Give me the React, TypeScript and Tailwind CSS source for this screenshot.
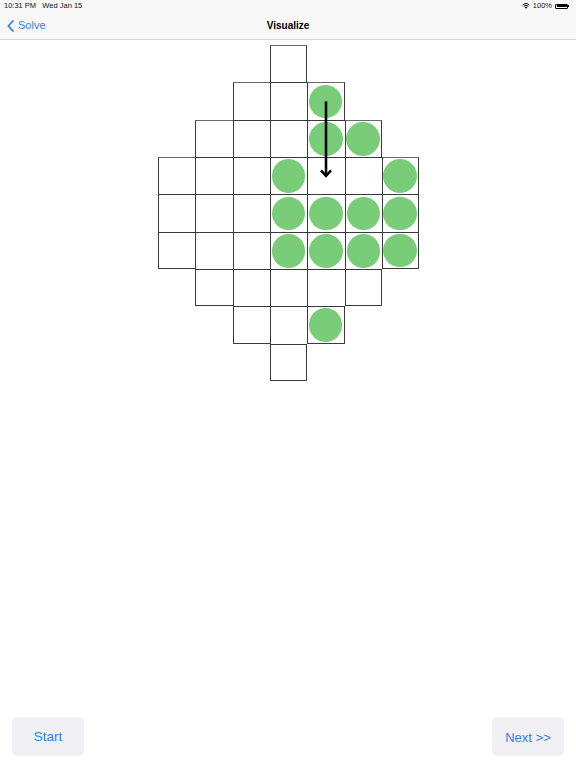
import React from 'react';

// which columns of each row are part of the board
const rows: [number, number][] = [
  [3, 3],
  [2, 4],
  [1, 5],
  [0, 6],
  [0, 6],
  [0, 6],
  [1, 5],
  [2, 4],
  [3, 3],
];

// pegs as "row-col"
const pegs = new Set([
  '1-4',
  '2-4', '2-5',
  '3-3', '3-6',
  '4-3', '4-4', '4-5', '4-6',
  '5-3', '5-4', '5-5', '5-6',
  '7-4',
]);

const isOn = (r: number, c: number) =>
  r >= 0 && r < rows.length && c >= rows[r][0] && c <= rows[r][1];

function StatusBar() {
  return (
    <div className="h-[12px] flex items-center justify-between px-[4px] text-[7.5px] text-[#111]">
      <span>10:31 PM&nbsp;&nbsp;&nbsp;Wed Jan 15</span>
      <div className="flex items-center gap-[3px] pr-[3px]">
        <svg width="8" height="6" viewBox="0 0 16 12">
          <path d="M8 11.5 L5.3 8.6 A4 4 0 0 1 10.7 8.6 Z" fill="#000" />
          <path d="M3.4 6.6 A6.8 6.8 0 0 1 12.6 6.6" stroke="#000" strokeWidth="2" fill="none" />
          <path d="M1.2 4.2 A10 10 0 0 1 14.8 4.2" stroke="#000" strokeWidth="2" fill="none" />
        </svg>
        <span>100%</span>
        <div className="flex items-center">
          <div className="w-[13px] h-[5px] rounded-[1px] border border-black p-[0.5px]">
            <div className="w-full h-full bg-black" />
          </div>
          <div className="w-[1px] h-[2px] bg-black" />
        </div>
      </div>
    </div>
  );
}

function NavBar() {
  return (
    <div className="relative h-[28px] flex items-center border-b border-[#d6d6d6]">
      <div className="flex items-center gap-[4px] pl-[7px] text-[#2f82ea] text-[11px]">
        <svg width="7" height="12" viewBox="0 0 7 12">
          <path d="M6 1 L1.3 6 L6 11" stroke="#2f82ea" strokeWidth="1.8" fill="none" strokeLinecap="round" strokeLinejoin="round" />
        </svg>
        <span>Solve</span>
      </div>
      <div className="absolute inset-0 flex items-center justify-center text-[10px] font-semibold text-black pointer-events-none">
        Visualize
      </div>
    </div>
  );
}

function Board() {
  return (
    <div className="relative mt-[5px] mx-auto w-[261px] h-[336px]">
      <div className="grid grid-cols-[37px_38px_37px_37px_38px_37px_37px] grid-rows-[37px_38px_37px_37px_38px_37px_37px_38px_37px]">
        {rows.map((_, r) =>
          Array.from({ length: 7 }, (_, c) => {
            const on = isOn(r, c);
            if (!on) return <div key={`${r}-${c}`} />;
            const right = !isOn(r, c + 1);
            const bottom = !isOn(r + 1, c);
            return (
              <div
                key={`${r}-${c}`}
                className={`flex items-center justify-center border-[#3a3a3a] border-t border-l ${
                  right ? 'border-r' : ''
                } ${bottom ? 'border-b' : ''} ${!isOn(r - 1, c) ? 'border-t-[#6a6a6a]' : ''}`}
              >
                {pegs.has(`${r}-${c}`) && (
                  <div className="w-[33.5px] h-[33.5px] shrink-0 rounded-full bg-[#79cd79]" />
                )}
              </div>
            );
          })
        )}
      </div>
      <svg
        className="absolute inset-0"
        width="261"
        height="336"
        viewBox="0 0 261 336"
      >
        <line x1={168} y1={56.4} x2={168} y2={131} stroke="#000" strokeWidth="2.6" />
        <path d="M163 125.4 L168 131 L173 125.4" stroke="#000" strokeWidth="2.4" fill="none" />
      </svg>
    </div>
  );
}

export default function App() {
  return (
    <div
      className="h-screen flex flex-col bg-white"
      style={{ fontFamily: '"Liberation Sans", Arial, sans-serif' }}
    >
      <div className="bg-[#f8f8f8]">
        <StatusBar />
        <NavBar />
      </div>

      <Board />

      <div className="flex-1" />

      {/* bottom controls */}
      <div className="flex justify-between px-[12px] pb-[12px]">
        <button className="w-[72px] h-[39px] pt-[2px] rounded-[5px] bg-[#f0f0f5] text-[#2f82ea] text-[13.5px]">
          Start
        </button>
        <button className="w-[72px] h-[39px] pt-[2px] rounded-[5px] bg-[#f0f0f5] text-[#2f82ea] text-[13px]">
          Next &gt;&gt;
        </button>
      </div>
    </div>
  );
}
